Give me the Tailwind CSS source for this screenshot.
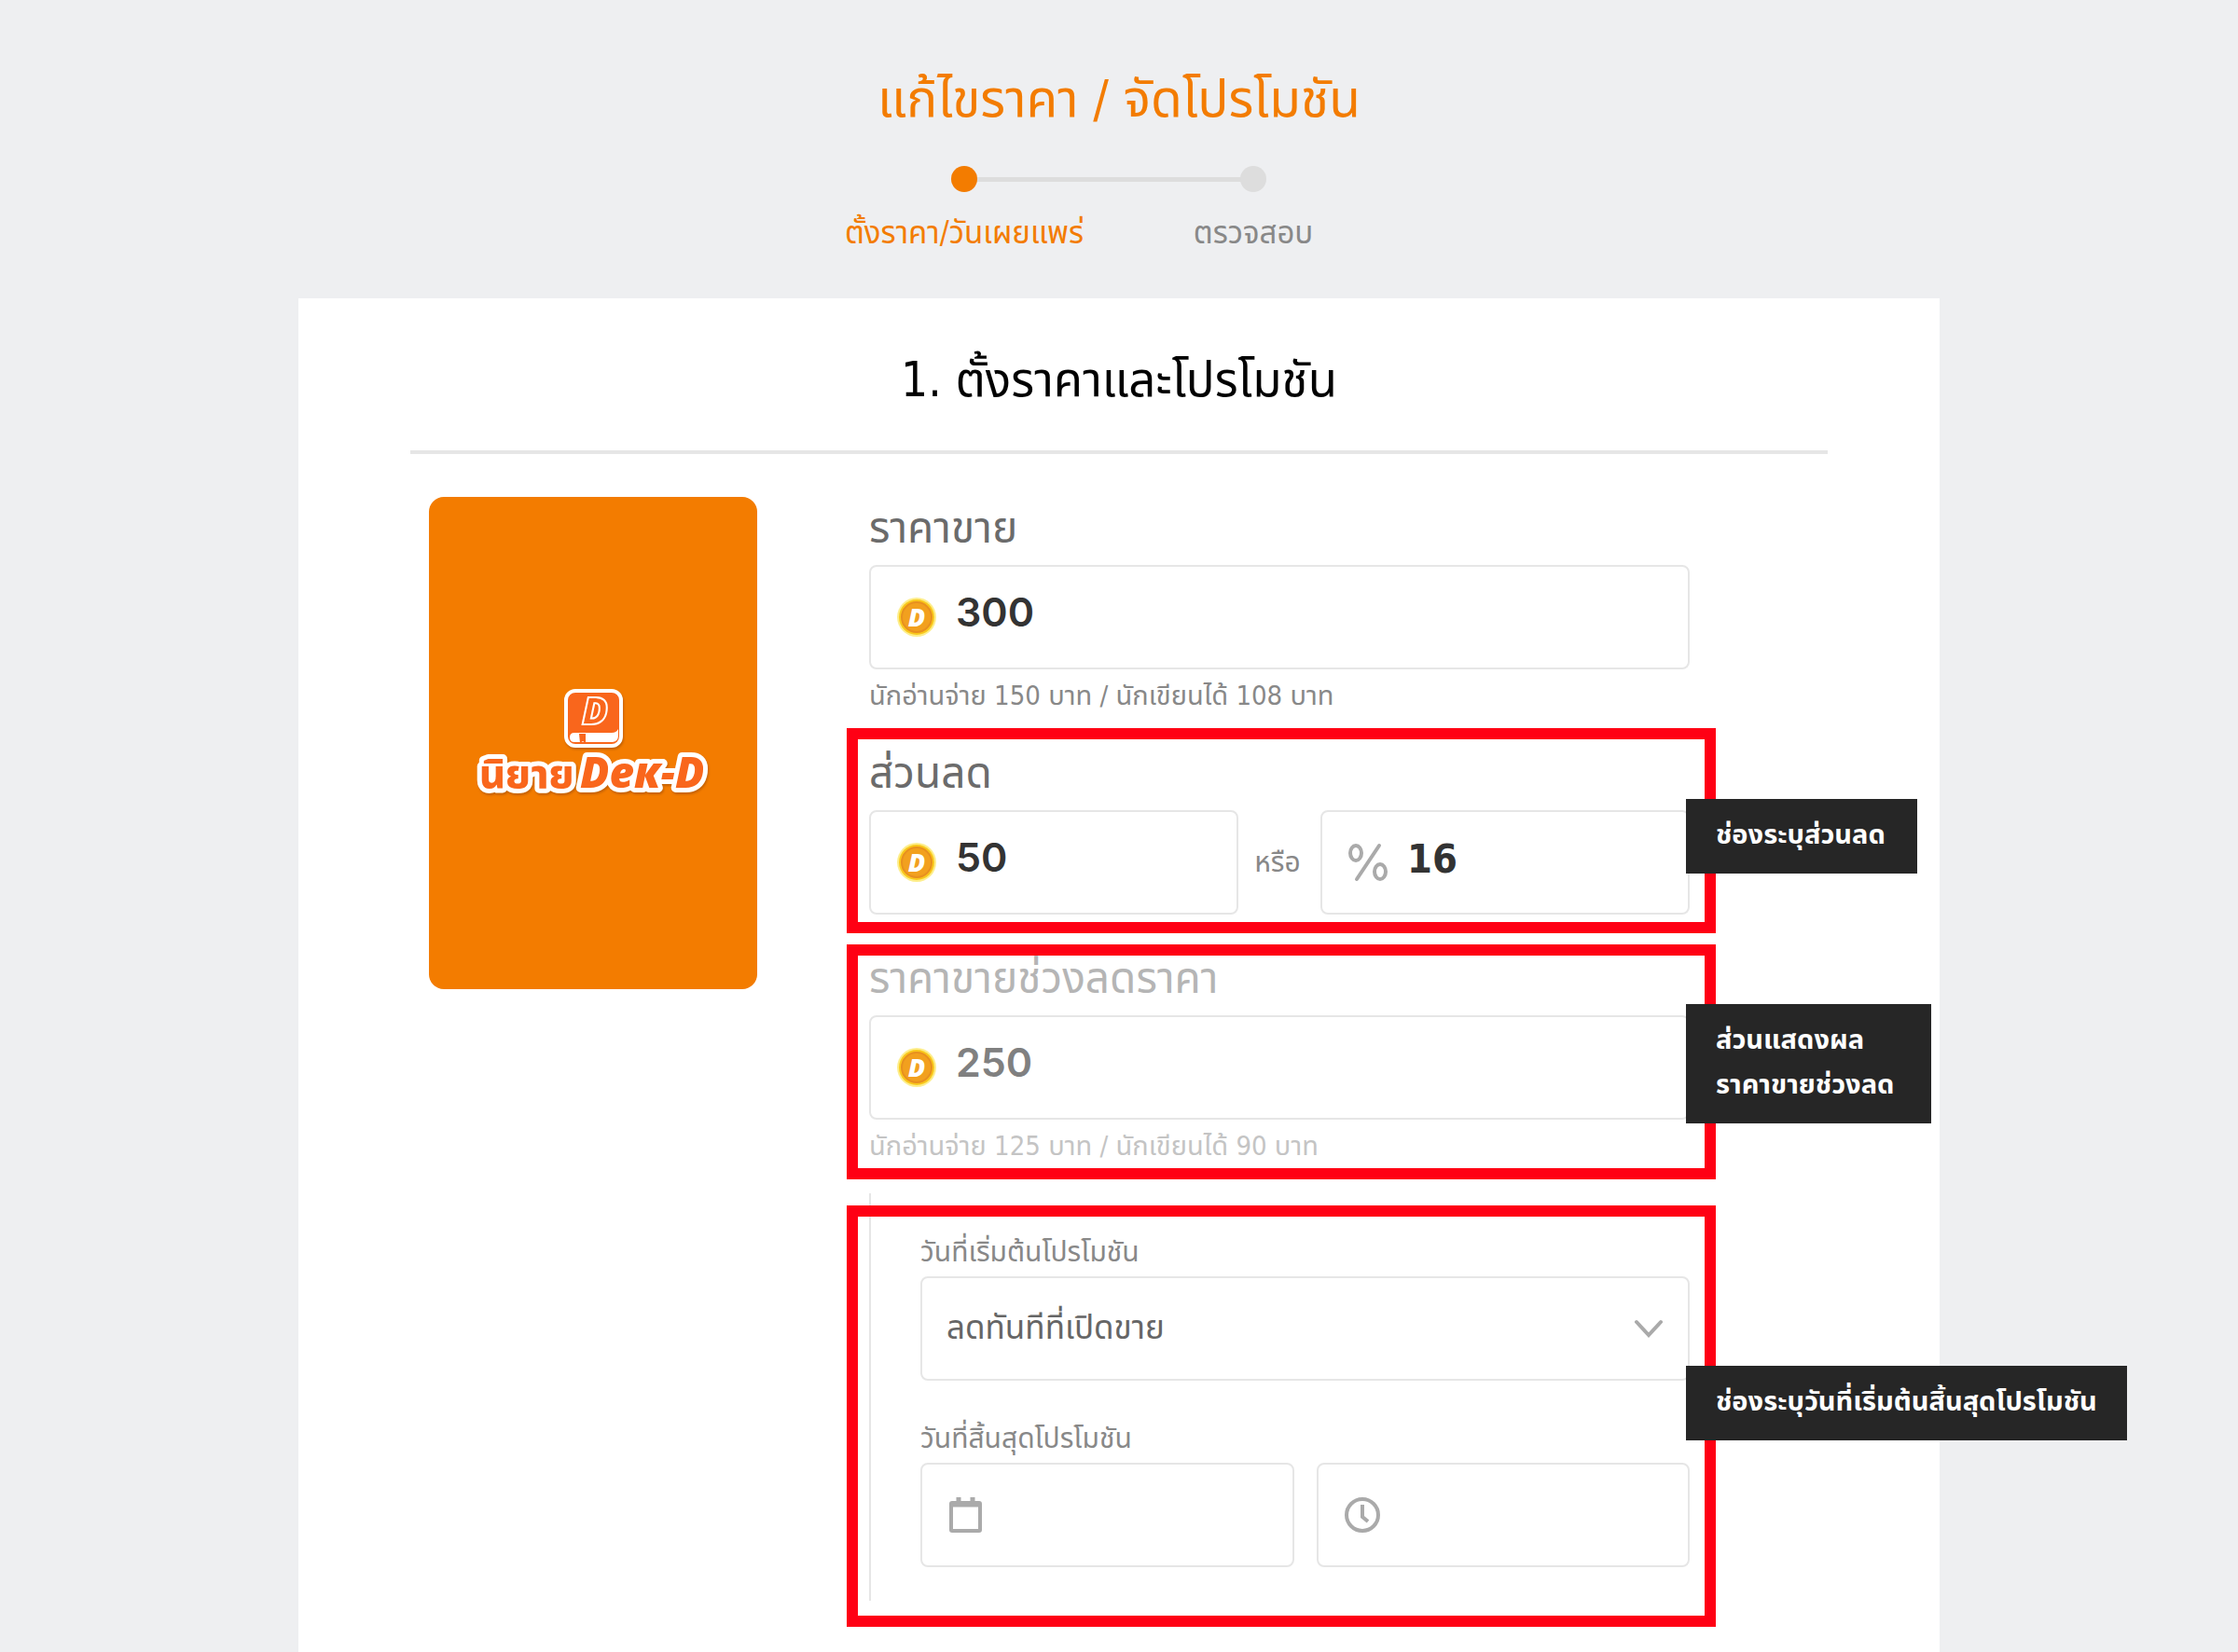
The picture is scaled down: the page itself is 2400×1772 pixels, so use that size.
<!DOCTYPE html>
<html lang="th">
<head>
    <meta charset="UTF-8">
    <meta name="viewport" content="width=device-width, initial-scale=1.0">
    <title>แก้ไขราคา / จัดโปรโมชัน</title>
    <script src="https://cdn.jsdelivr.net/npm/@tailwindcss/browser@4"></script>
</head>
<body class="flex min-h-screen flex-col bg-[#eeeff1] font-['DejaVu_Sans_Condensed','Noto_Sans_Thai','Noto_Sans',sans-serif] text-[#888888]">

    <!-- สัญลักษณ์ที่ใช้ซ้ำ -->
    <svg class="hidden">
        <symbol id="coin" viewBox="0 0 42 42">
            <circle cx="21" cy="21" r="21" fill="#fdee8c"/>
            <circle cx="21" cy="21" r="19" fill="#f9c81c"/>
            <circle cx="21" cy="21" r="16" fill="#f2a01e" stroke="#e8901f" stroke-width="2"/>
            <text x="21" y="31" text-anchor="middle" font-family="Open Sans, sans-serif" font-size="27" font-weight="800" font-style="italic" fill="#ffffff">D</text>
        </symbol>
    </svg>

    <header class="flex h-80 flex-col items-center pt-[70px]">
        <h1 class="text-[55px] leading-[72px] text-[#f37c00]">แก้ไขราคา / จัดโปรโมชัน</h1>
        <ol class="relative mt-9 mr-[22px] grid w-[620px] grid-cols-2 text-[33px] leading-[48px]">
            <li class="absolute inset-x-[155px] top-[12px] h-[5px] bg-[#dddddd]" aria-hidden="true"></li>
            <li class="relative flex flex-col items-center gap-5 whitespace-nowrap text-[#f37c00]">
                <span class="size-7 rounded-full bg-[#f37c00]"></span>ตั้งราคา/วันเผยแพร่
            </li>
            <li class="relative flex flex-col items-center gap-5">
                <span class="size-7 rounded-full bg-[#dddddd]"></span>ตรวจสอบ
            </li>
        </ol>
    </header>

    <main class="mx-auto w-full max-w-[1760px] flex-1 bg-white px-[120px] pb-14">
        <h2 class="border-b-4 border-[#e6e6e6] pt-[52px] pb-[39px] text-center text-[51px] leading-[72px] text-black">1. ตั้งราคาและโปรโมชัน</h2>

        <form class="flex items-start gap-[120px] pr-[148px] pl-5">
            <!-- ปกนิยาย -->
            <div class="mt-[46px] flex h-[528px] w-[352px] shrink-0 items-center justify-center rounded-2xl bg-[#f37c00]">
                <svg class="w-[270px]" viewBox="0 0 270 150" role="img" aria-label="นิยาย Dek-D">
                    <g filter="drop-shadow(1px 2px 1px rgb(150 70 0 / 0.5))">
                        <rect x="106" y="19" width="59" height="59" rx="10" fill="#f9661c" stroke="#ffffff" stroke-width="4"/>
                        <text x="123" y="55" font-family="Open Sans, sans-serif" font-size="41" font-weight="800" font-style="italic" fill="#f9661c" stroke="#ffffff" stroke-width="2">D</text>
                        <path d="M162 60q-2 4-7 4H115q-5 0-5 5t5 5h41q6-1 6-7z" fill="#ffffff"/>
                        <path d="M120 65h7v10l-3-2-3 2z" fill="#f9661c"/>
                    </g>
                    <g filter="drop-shadow(1px 2px 1px rgb(150 70 0 / 0.5))" fill="#f9661c" stroke="#ffffff" stroke-width="10" stroke-linejoin="round" paint-order="stroke" font-weight="800">
                        <text x="13" y="123" font-family="Noto Sans Thai, Noto Sans, sans-serif" font-size="43">นิยาย</text>
                        <text x="121" y="123" font-family="Open Sans, sans-serif" font-size="46" font-style="italic">Deк-D</text>
                    </g>
                </svg>
            </div>

            <div class="min-w-0 flex-1 pt-[53px]">
                <section>
                    <label for="price" class="mb-[14px] block text-[46px] leading-[52px] text-[#6b6b6b]">ราคาขาย</label>
                    <div class="flex h-28 items-center gap-[21px] rounded-lg border-2 border-[#e6e6e6] pl-7">
                        <svg class="size-[42px] shrink-0"><use href="#coin"/></svg>
                        <input id="price" type="text" value="300" class="h-full w-0 flex-1 pb-3 font-['Inter',sans-serif] text-[43px] font-semibold text-[#333333] outline-none">
                    </div>
                    <p class="mt-2 text-[29px] leading-10">นักอ่านจ่าย 150 บาท / นักเขียนได้ 108 บาท</p>
                </section>

                <section class="relative mt-[37px]">
                    <label for="discount" class="mb-[14px] block text-[46px] leading-[52px] text-[#6b6b6b]">ส่วนลด</label>
                    <div class="flex items-center">
                        <div class="flex h-28 flex-1 items-center gap-[21px] rounded-lg border-2 border-[#e6e6e6] pl-7">
                            <svg class="size-[42px] shrink-0"><use href="#coin"/></svg>
                            <input id="discount" type="text" value="50" class="h-full w-0 flex-1 pb-3 font-['Inter',sans-serif] text-[43px] font-semibold text-[#333333] outline-none">
                        </div>
                        <label for="percent" class="w-[88px] pr-1 text-center text-[30px] leading-10">หรือ</label>
                        <div class="flex h-28 flex-1 items-center gap-[21px] rounded-lg border-2 border-[#e6e6e6] pl-7">
                            <svg class="size-[42px] shrink-0" viewBox="0 0 42 42" fill="none" stroke="#aaaaaa" stroke-width="4" stroke-linecap="round">
                                <ellipse cx="8" cy="11" rx="6" ry="8"/>
                                <ellipse cx="34" cy="31" rx="6" ry="8"/>
                                <path d="M33 3 9 39"/>
                            </svg>
                            <input id="percent" type="text" value="16" class="h-full w-0 flex-1 pb-2 text-[43px] font-bold text-[#333333] outline-none">
                        </div>
                    </div>
                    <div class="pointer-events-none absolute -top-[22px] -right-7 -bottom-5 -left-6 border-[12px] border-[#ff0014]"></div>
                    <p class="absolute top-[54px] left-[876px] bg-[#262626] pt-[14px] pr-[34px] pb-[18px] pl-8 text-[29px] leading-[48px] font-bold whitespace-nowrap text-white">ช่องระบุส่วนลด</p>
                </section>

                <section class="relative mt-[42px]">
                    <label for="sale" class="mb-[14px] block text-[46px] leading-[52px] text-[#b5b5b5]">ราคาขายช่วงลดราคา</label>
                    <div class="flex h-28 items-center gap-[21px] rounded-lg border-2 border-[#e6e6e6] pl-7">
                        <svg class="size-[42px] shrink-0"><use href="#coin"/></svg>
                        <input id="sale" type="text" value="250" readonly class="h-full w-0 flex-1 pb-3 font-['Inter',sans-serif] text-[43px] font-semibold text-[#808080] outline-none">
                    </div>
                    <p class="mt-2 text-[29px] leading-10 text-[#c4c4c4]">นักอ่านจ่าย 125 บาท / นักเขียนได้ 90 บาท</p>
                    <div class="pointer-events-none absolute -top-[10px] -right-7 -bottom-4 -left-6 border-[12px] border-[#ff0014]"></div>
                    <p class="absolute top-[54px] left-[876px] bg-[#262626] pt-[14px] pr-10 pb-[18px] pl-8 text-[29px] leading-[48px] font-bold whitespace-nowrap text-white">ส่วนแสดงผล<br>ราคาขายช่วงลด</p>
                </section>

                <section class="relative mt-[31px] border-l-2 border-[#e6e6e6] pt-[43px] pb-9 pl-[53px]">
                    <label for="start" class="mb-[6px] block text-[30px] leading-10">วันที่เริ่มต้นโปรโมชัน</label>
                    <div class="relative">
                        <select id="start" class="h-28 w-full appearance-none rounded-lg border-2 border-[#e6e6e6] px-[26px] pb-[2px] text-[35px] text-[#666666] outline-none">
                            <option>ลดทันทีที่เปิดขาย</option>
                        </select>
                        <svg class="pointer-events-none absolute top-[46px] right-7 h-5 w-8" viewBox="0 0 32 20" fill="none" stroke="#aaaaaa" stroke-width="4" stroke-linecap="round">
                            <path d="M3 3 16 17 29 3"/>
                        </svg>
                    </div>

                    <label for="end-date" class="mt-[42px] mb-[6px] block text-[30px] leading-10">วันที่สิ้นสุดโปรโมชัน</label>
                    <div class="flex gap-6">
                        <div class="flex h-28 flex-1 items-center gap-5 rounded-lg border-2 border-[#e6e6e6] pl-7">
                            <svg class="size-10 shrink-0" viewBox="0 0 40 40" fill="none" stroke="#aaaaaa" stroke-width="4">
                                <rect x="3" y="7" width="31" height="30" rx="1"/>
                                <path d="M2 9H35M11 1V8M26 1V8" stroke-width="5"/>
                            </svg>
                            <input id="end-date" type="text" class="h-full w-0 flex-1 text-[35px] outline-none">
                        </div>
                        <div class="flex h-28 flex-1 items-center gap-5 rounded-lg border-2 border-[#e6e6e6] pl-7">
                            <svg class="size-10 shrink-0" viewBox="0 0 40 40" fill="none" stroke="#aaaaaa" stroke-width="4">
                                <circle cx="19" cy="20" r="17"/>
                                <path d="M19 9V22L25 27"/>
                            </svg>
                            <input id="end-time" type="text" aria-label="เวลาสิ้นสุดโปรโมชัน" class="h-full w-0 flex-1 text-[35px] outline-none">
                        </div>
                    </div>
                    <div class="pointer-events-none absolute top-[13px] -right-7 -bottom-7 -left-[26px] border-[12px] border-[#ff0014]"></div>
                    <p class="absolute top-[185px] left-[874px] bg-[#262626] px-8 pt-[14px] pb-[18px] text-[29px] leading-[48px] font-bold whitespace-nowrap text-white">ช่องระบุวันที่เริ่มต้นสิ้นสุดโปรโมชัน</p>
                </section>
            </div>
        </form>
    </main>

</body>
</html>
